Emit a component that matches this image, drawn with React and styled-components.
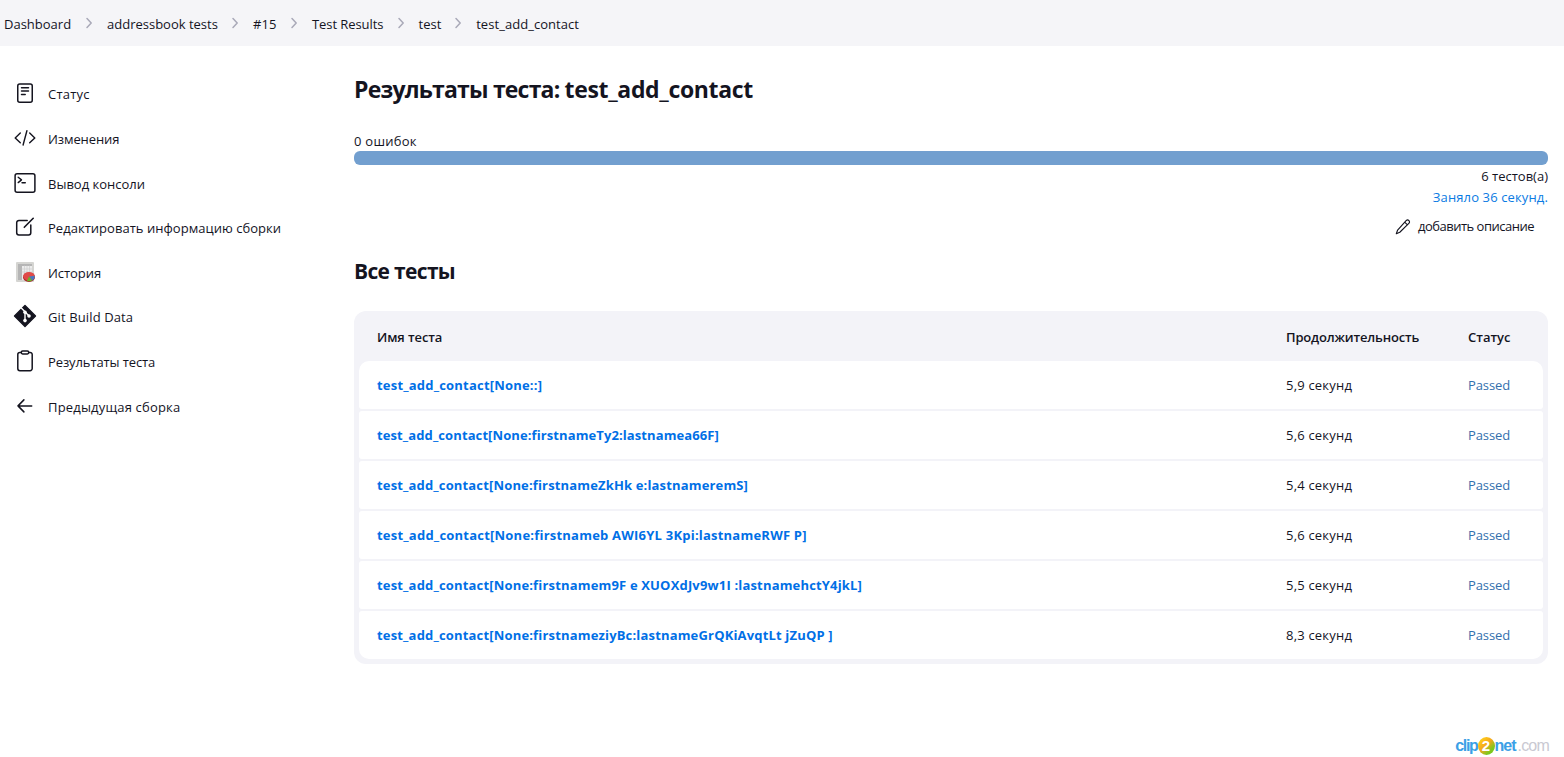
import React from 'react';
import styled, { createGlobalStyle } from 'styled-components';

const GlobalStyle = createGlobalStyle`
  * { box-sizing: border-box; }
  body {
    margin: 0;
    background: #fff;
    color: #14141f;
    font-family: "Open Sans", "Noto Sans", sans-serif;
    font-size: 13px;
    line-height: 20px;
  }
  svg { display: block; flex: none; }
  a { text-decoration: none; color: inherit; }
`;

const Text = styled.span`
  white-space: pre;
  letter-spacing: ${(p) => p.$track || 0}px;
`;

const Page = styled.div`
  display: flex;
  flex-direction: column;
  height: 757px;
  overflow: hidden;
`;

const Breadcrumbs = styled.nav`
  display: flex;
  align-items: center;
  flex: none;
  height: 46px;
  padding: 2px 4px 0;
  background: #f5f5f8;
`;

const Crumb = styled.a`
  flex: none;
  width: ${(p) => p.$width}px;
`;

const Separator = styled.span`
  display: flex;
  justify-content: center;
  flex: none;
  width: 36px;
  padding-bottom: 2px;
`;

const Body = styled.div`
  display: flex;
  flex: 1;
  min-height: 0;
`;

const Sidebar = styled.aside`
  display: flex;
  flex-direction: column;
  flex: none;
  width: 354px;
  padding: 26.15px 0 0 12px;
`;

const Task = styled.a`
  display: flex;
  align-items: center;
  gap: 10px;
  height: 44.6px;
`;

const TaskIcon = styled.span`
  display: flex;
  flex: none;
  width: 26px;
  height: 26px;
  margin-bottom: 2px;
`;

const Main = styled.main`
  display: flex;
  flex-direction: column;
  flex: 1;
  padding: 27px 16px 0 0;
`;

const Title = styled.h1`
  margin: 0;
  font-size: 23px;
  line-height: 32px;
  font-weight: 700;
`;

const Failures = styled.div`
  margin-top: 26px;
`;

const Bar = styled.div`
  flex: none;
  height: 14px;
  border-radius: 6px;
  background: #729fcf;
`;

const Summary = styled.div`
  display: flex;
  flex-direction: column;
  align-items: flex-end;
  padding-top: 1px;
  line-height: 21px;
`;

const Took = styled.a`
  color: #0b7be3;
`;

const AddDescription = styled.a`
  display: flex;
  align-items: center;
  gap: 7px;
  height: 37px;
  margin-right: 14px;
`;

const Subtitle = styled.h2`
  margin: 10px 0 0;
  font-size: 21px;
  line-height: 32px;
  font-weight: 700;
`;

const Table = styled.div`
  display: flex;
  flex-direction: column;
  gap: 2px;
  margin-top: 24px;
  padding: 0 5px 5px;
  border-radius: 12px;
  background: #f3f3f8;
`;

const Row = styled.div`
  display: grid;
  grid-template-columns: 909px 182px 1fr;
  align-items: center;
  height: 48px;
  padding-left: 18px;
  border-radius: 3px;
  background: #fff;
  &:nth-child(2) { border-radius: 10px 10px 3px 3px; }
  &:last-child { border-radius: 3px 3px 10px 10px; }
`;

const HeadRow = styled(Row)`
  padding-top: 4px;
  background: none;
  font-weight: 600;
`;

const TestLink = styled.a`
  color: #006fe6;
  font-weight: 700;
`;

const Passed = styled.span`
  color: #3370ad;
`;

const Footer = styled.footer`
  display: flex;
  justify-content: flex-end;
  align-items: center;
  flex: none;
  height: 22px;
  padding-right: 15px;
`;

const Brand = styled.span`
  display: flex;
  align-items: center;
  color: #3ba0e6;
  font-family: "Liberation Sans", sans-serif;
  font-size: 16px;
  font-weight: 700;
  line-height: 20px;
`;

const BrandDigit = styled.span`
  display: flex;
  align-items: center;
  justify-content: center;
  width: 17px;
  height: 18px;
  border-radius: 50%;
  background: linear-gradient(135deg, #ffd21a 10%, #f5a81c 45%, #7cc81e 75%);
  color: #fff;
  font-size: 15px;
`;

const BrandDomain = styled.span`
  margin-left: 2px;
  color: #c9c9d2;
  font-weight: 400;
`;

const line = {
  fill: 'none',
  stroke: '#14141f',
  strokeWidth: 1.5,
  strokeLinecap: 'round',
  strokeLinejoin: 'round',
};

const Icon = ({ children, ...rest }) => (
  <svg width="26" height="26" viewBox="0 0 26 26" {...line} {...rest}>
    {children}
  </svg>
);

const icons = {
  status: (
    <Icon>
      <rect x="5.75" y="4" width="14.5" height="18.2" rx="2" />
      <path d="M9.5 7.8h7M9.5 11.1h7M9.5 14.4h3.7" />
    </Icon>
  ),
  changes: (
    <Icon strokeWidth="1.4">
      <path d="M8.3 8L3.2 12.9l5.1 4.9M17.7 8l5.1 4.9-5.1 4.9M14.9 5.8L11.1 20" />
    </Icon>
  ),
  console: (
    <Icon>
      <rect x="3.1" y="3.8" width="19.8" height="18.4" rx="2" />
      <path d="M6.2 7.2l3.3 2.7-3.3 2.7M10 12.8h3.3" strokeWidth="1.4" />
    </Icon>
  ),
  edit: (
    <Icon>
      <path d="M15.2 6.5H6.9a2.2 2.2 0 0 0-2.2 2.2v10a2.2 2.2 0 0 0 2.2 2.2h9.7a2.2 2.2 0 0 0 2.2-2.2v-7.8" />
      <path d="M21.2 4.3l-8.9 9" strokeWidth="1.6" />
    </Icon>
  ),
  history: (
    <Icon stroke="none">
      <rect x="4" y="3" width="18" height="20" rx="1" fill="#d5d5d2" />
      <rect x="6" y="5" width="14" height="16" fill="#ececec" />
      <path d="M6 5h14v2H6zM6 5h4v16H6z" fill="#b5b5b5" />
      <path d="M12.5 7v14M15 7v14M17.5 7v14M10 10h10M10 13h10" stroke="#cfcfcf" strokeWidth=".7" />
      <ellipse cx="17" cy="18.3" rx="6" ry="4.6" fill="#a82424" />
      <ellipse cx="17" cy="17.2" rx="5.8" ry="4.2" fill="#e04a48" />
      <path d="M17 17.5l5.6-.8q.7 3-2.5 4.8z" fill="#4b78bd" />
      <path d="M17 17.5l3.1 4q-3 1.4-5.2.5z" fill="#69b52b" />
    </Icon>
  ),
  git: (
    <Icon stroke="none">
      <path
        d="M13 2.5L23.5 13 13 23.5 2.5 13z"
        fill="#14141f"
        stroke="#14141f"
        strokeWidth="1.4"
      />
      <path d="M9.3 5.1L13 8.8v8.6M13.3 9.2l3.6 3.6" stroke="#fff" strokeWidth="1.4" />
      <circle cx="13" cy="9.2" r="1.8" fill="#fff" />
      <circle cx="13" cy="17.6" r="1.8" fill="#fff" />
      <circle cx="17" cy="13" r="1.8" fill="#fff" />
    </Icon>
  ),
  results: (
    <Icon>
      <path d="M9.3 4.4H7.9a2.1 2.1 0 0 0-2.1 2.1v14.1a2.1 2.1 0 0 0 2.1 2.1h10.2a2.1 2.1 0 0 0 2.1-2.1V6.5a2.1 2.1 0 0 0-2.1-2.1h-1.4" />
      <rect x="9.3" y="2.9" width="7.4" height="3" rx="1.3" />
    </Icon>
  ),
  previous: (
    <Icon>
      <path d="M11.9 6.9L6 12.9l5.9 6M6.3 12.9h13.4" />
    </Icon>
  ),
};

const Chevron = () => (
  <svg width="8" height="12" viewBox="0 0 8 12" {...line} stroke="#a9a9b8">
    <path d="M2 1.500L6.200 6l-4.200 4.500" />
  </svg>
);

const Pencil = () => (
  <svg width="16" height="16" viewBox="0.500 0.500 17 17" {...line} strokeWidth="1.200">
    <path d="M12.300 2.300c1-1 2.200-.9 3-.1s.9 1.900-.1 2.900L5.600 14.600 1.900 16.200l1.400-4zM10.800 3.900l2.900 2.800" />
  </svg>
);

const crumbs = [
  { label: 'Dashboard', width: 67, track: 0 },
  { label: 'addressbook tests', width: 110, track: 0 },
  { label: '#15', width: 23, track: 0.1 },
  { label: 'Test Results', width: 70.5, track: -0.08 },
  { label: 'test', width: 21.7, track: 0 },
  { label: 'test_add_contact', width: 104, track: 0.05 },
];

const tasks = [
  { icon: 'status', label: 'Статус', track: 0.2 },
  { icon: 'changes', label: 'Изменения', track: -0.1 },
  { icon: 'console', label: 'Вывод консоли', track: 0 },
  { icon: 'edit', label: 'Редактировать информацию сборки', track: 0.03 },
  { icon: 'history', label: 'История', track: -0.05 },
  { icon: 'git', label: 'Git Build Data', track: 0.12 },
  { icon: 'results', label: 'Результаты теста', track: -0.1 },
  { icon: 'previous', label: 'Предыдущая сборка', track: 0.18 },
];

const tests = [
  { name: 'test_add_contact[None::]', time: '5,9', track: 0.2 },
  { name: 'test_add_contact[None:firstnameTy2:lastnamea66F]', time: '5,6', track: 0.1 },
  { name: 'test_add_contact[None:firstnameZkHk e:lastnameremS]', time: '5,4', track: 0.155 },
  { name: 'test_add_contact[None:firstnameb AWI6YL 3Kpi:lastnameRWF P]', time: '5,6', track: 0.22 },
  { name: 'test_add_contact[None:firstnamem9F e XUOXdJv9w1I :lastnamehctY4jkL]', time: '5,5', track: 0.17 },
  { name: 'test_add_contact[None:firstnameziyBc:lastnameGrQKiAvqtLt jZuQP ]', time: '8,3', track: 0.17 },
];

export default function App() {
  return (
    <Page>
      <GlobalStyle />
      <Breadcrumbs>
        {crumbs.map((c, i) => (
          <React.Fragment key={c.label}>
            {i > 0 && <Separator><Chevron /></Separator>}
            <Crumb $width={c.width}><Text $track={c.track}>{c.label}</Text></Crumb>
          </React.Fragment>
        ))}
      </Breadcrumbs>
      <Body>
        <Sidebar>
          {tasks.map((t) => (
            <Task key={t.label}>
              <TaskIcon>{icons[t.icon]}</TaskIcon>
              <Text $track={t.track}>{t.label}</Text>
            </Task>
          ))}
        </Sidebar>
        <Main>
          <Title>
            <Text $track={-0.8}>Результаты теста: </Text>
            <Text $track={-0.34}>test_add_contact</Text>
          </Title>
          <Failures><Text $track={0.25}>0 ошибок</Text></Failures>
          <Bar />
          <Summary>
            <Text>6 тестов(а)</Text>
            <Took><Text $track={0.13}>Заняло 36 секунд.</Text></Took>
            <AddDescription>
              <Pencil />
              <Text $track={-0.5}>добавить описание</Text>
            </AddDescription>
          </Summary>
          <Subtitle><Text $track={-0.67}>Все тесты</Text></Subtitle>
          <Table>
            <HeadRow>
              <Text $track={-0.1}>Имя теста</Text>
              <Text $track={-0.17}>Продолжительность</Text>
              <Text>Статус</Text>
            </HeadRow>
            {tests.map((t) => (
              <Row key={t.name}>
                <TestLink><Text $track={t.track}>{t.name}</Text></TestLink>
                <Text $track={0.2}>{t.time} секунд</Text>
                <Passed><Text $track={-0.1}>Passed</Text></Passed>
              </Row>
            ))}
          </Table>
        </Main>
      </Body>
      <Footer>
        <Brand>
          <Text $track={-1.3}>clip</Text>
          <BrandDigit>2</BrandDigit>
          <Text $track={-1}>net</Text>
          <BrandDomain><Text $track={-0.8}>.com</Text></BrandDomain>
        </Brand>
      </Footer>
    </Page>
  );
}
